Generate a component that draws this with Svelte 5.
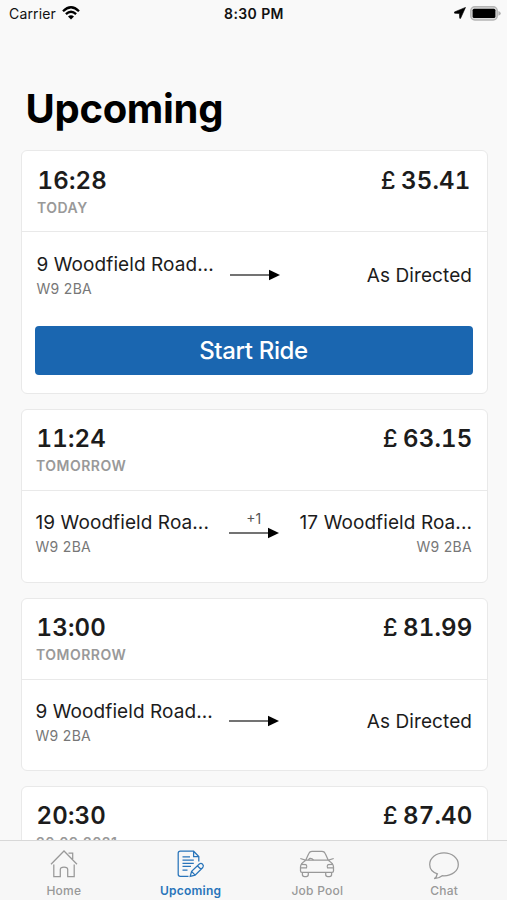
<script>
	let active = 'Upcoming';

	const rides = [
		{
			time: '16:28',
			day: 'TODAY',
			price: '35.41',
			from: '9 Woodfield Road...',
			fromCode: 'W9 2BA',
			to: 'As Directed',
			canStart: true
		},
		{
			time: '11:24',
			day: 'TOMORROW',
			price: '63.15',
			from: '19 Woodfield Roa...',
			fromCode: 'W9 2BA',
			to: '17 Woodfield Roa...',
			toCode: 'W9 2BA',
			stops: '+1'
		},
		{
			time: '13:00',
			day: 'TOMORROW',
			price: '81.99',
			from: '9 Woodfield Road...',
			fromCode: 'W9 2BA',
			to: 'As Directed'
		},
		{
			time: '20:30',
			day: '20.09.2021',
			price: '87.40'
		}
	];

	const tabs = ['Home', 'Upcoming', 'Job Pool', 'Chat'];
</script>

<div class="screen">
	<header class="status">
		<div class="carrier">
			<span>Carrier</span>
			<svg width="18" height="14" viewBox="0 0 18 14">
				<path d="M1 5.2Q9 -2.6 17 5.2M3.9 8.2Q9 3.3 14.1 8.2" fill="none" stroke="#000" stroke-width="2.3" />
				<path d="M6 10.4Q9 7.9 12 10.4L9 13.6Z" />
			</svg>
		</div>
		<div class="clock">8:30 PM</div>
		<div class="power">
			<svg width="12" height="12" viewBox="0 0 12 12">
				<path d="M11.5 0.4L0.4 5Q0 5.8 0.6 6.2L5.4 6.5L5.7 11.2Q6 11.9 6.6 11.3Z" stroke="#000" stroke-width="0.6" />
			</svg>
			<svg width="31" height="15" viewBox="0 0 31 15">
				<rect x="0.8" y="0.8" width="26.4" height="13.2" rx="4" fill="#dcdcdc" stroke="#b5b5b5" stroke-width="1.5" />
				<rect x="2.6" y="2.8" width="22.8" height="9.2" rx="1.5" />
				<path d="M28.4 5Q30.8 6 30.8 7.4T28.4 9.8Z" fill="#b0b0b0" />
			</svg>
		</div>
	</header>

	<h1>Upcoming</h1>

	<main>
		{#each rides as ride}
			<section class="card" class:next={ride.canStart}>
				<div class="head">
					<div>
						<div class="time">{ride.time}</div>
						<div class="day">{ride.day}</div>
					</div>
					<div class="price"><span>£</span>{ride.price}</div>
				</div>
				{#if ride.from}
					<div class="route">
						<div class="place">
							<div class="street">{ride.from}</div>
							<div class="code">{ride.fromCode}</div>
						</div>
						<div class="arrow">
							<span>{ride.stops || ''}</span>
							<svg width="50" height="12" viewBox="0 0 50 12">
								<path d="M0 6H40" stroke="#444" stroke-width="1.6" />
								<path d="M39 0.8L50 6L39 11.2Z" />
							</svg>
						</div>
						<div class="place to">
							<div class="street">{ride.to}</div>
							{#if ride.toCode}
								<div class="code">{ride.toCode}</div>
							{/if}
						</div>
					</div>
				{/if}
				{#if ride.canStart}
					<button class="start">Start Ride</button>
				{/if}
			</section>
		{/each}
	</main>

	<nav>
		{#each tabs as tab}
			<button class="tab" class:active={tab === active} on:click={() => (active = tab)}>
				<svg width="36" height="32" viewBox="0 0 36 32">
					{#if tab === 'Home'}
						<path d="M5 16.2L18 3L31 16.2M22.5 5.2H26.7V11M7.8 16.5V28.5H14.3V21.5Q14.3 19 18 19T21.7 21.5V28.5H28.2V16.5" />
					{:else if tab === 'Upcoming'}
						<path d="M15.5 28.3H7.2Q5.2 28.3 5.2 26.3V5.2Q5.2 3.2 7.2 3.2H20.6L25.8 8.6V13.5M20.6 3.2V8.6H25.8M9.5 8.8H17M9.5 12.2H20.8M9.5 15.3H20.8M9.5 18.4H18M9.5 22H14.5" />
						<path d="M17.2 28.3L18.6 23.3L26.3 16Q28.1 14.7 29.6 16.2T29.8 19.5L22.1 27.1ZM18.6 23.3L22.1 27.1M24.5 18L28 21.3" />
					{:else if tab === 'Job Pool'}
						<path d="M6.7 12.2L9.8 5.5Q10.7 3.4 13 3.4H23Q25.3 3.4 26.2 5.5L29.3 12.2M1.3 10.5L6.4 12.2H29.6L34.7 10.5M6.5 12.5Q1.5 15.5 1.5 19V23Q1.5 24.3 3 24.3H33Q34.5 24.3 34.5 23V19Q34.5 15.5 29.5 12.5" />
						<path d="M9.5 12Q10.5 9.5 13 10.8L14.5 12M2 16.3L7 16.7Q8.5 18.5 7.5 19.8H2M34 16.3L29 16.7Q27.5 18.5 28.5 19.8H34M3.4 24.5V26.5Q3.4 28.6 5.5 28.6H7.2Q9.3 28.6 9.3 26.5V24.5M26.7 24.5V26.5Q26.7 28.6 28.8 28.6H30.5Q32.6 28.6 32.6 26.5V24.5" />
					{:else}
						<path d="M12 26.2Q3.7 23.5 3.7 16.5C3.7 10.1 10 4.9 18 4.9S32.3 10.1 32.3 16.5S26 27.8 18 27.8L16.2 27.7Q13 30.4 8.2 30.6Q11.2 29.2 10.8 25.8" />
					{/if}
				</svg>
				<span>{tab}</span>
			</button>
		{/each}
	</nav>
</div>

<style>
	:global(body) {
		background: #f9f9f9;
	}
	.screen {
		display: flex;
		flex-direction: column;
		height: 900px;
		overflow: hidden;
		background: #f9f9f9;
		color: #1c1c1c;
		font-family: Inter, sans-serif;
	}
	.status {
		display: grid;
		grid-template-columns: 1fr auto 1fr;
		align-items: center;
		height: 26px;
		flex: none;
		padding: 0 6px 0 9px;
		color: #111;
		font-size: 14px;
	}
	.carrier,
	.power {
		display: flex;
		align-items: center;
		gap: 6px;
	}
	.carrier {
		letter-spacing: 0.15px;
	}
	.power {
		justify-content: flex-end;
		gap: 4px;
	}
	.clock {
		font-weight: 600;
		letter-spacing: 0.4px;
		margin-right: 2px;
	}
	h1 {
		flex: none;
		margin: 59px 0 0 25.5px;
		height: 65px;
		font-size: 40px;
		line-height: 48px;
		font-weight: 700;
		letter-spacing: -0.3px;
		color: #000;
	}
	main {
		flex: 1;
		min-height: 0;
		overflow: hidden;
		display: flex;
		flex-direction: column;
		gap: 15px;
		padding: 0 19.5px 0 20.5px;
	}
	.card {
		flex: none;
		box-sizing: border-box;
		min-height: 173.5px;
		border: 1.5px solid #e9e9e9;
		border-radius: 6px;
		background: #fff;
	}
	.head {
		display: flex;
		justify-content: space-between;
		box-sizing: border-box;
		height: 81px;
		padding: 14px 14px 0 15px;
		border-bottom: 1.5px solid #e9e9e9;
	}
	.next .head {
		padding: 15px 16px 0;
	}
	.time,
	.price {
		font-size: 24px;
		line-height: 30px;
		font-weight: 600;
		font-variant-numeric: tabular-nums;
		letter-spacing: 0.2px;
	}
	.price span {
		margin-right: 5px;
		font-weight: 500;
	}
	.day {
		margin: 4px 0 0 -0.5px;
		font-size: 14px;
		line-height: 16px;
		font-weight: 600;
		letter-spacing: 0.5px;
		color: #999;
	}
	.route {
		display: grid;
		grid-template-columns: 1fr 50px 1fr;
		align-items: center;
		gap: 16px;
		height: 47px;
		padding: 19px 14.5px 0 14px;
	}
	.next .route {
		padding-top: 20px;
		height: 46px;
	}
	.place {
		white-space: nowrap;
	}
	.to {
		text-align: right;
	}
	.next .street,
	.next .code {
		margin-left: 1px;
	}
	.street {
		font-size: 19px;
		line-height: 26px;
		letter-spacing: 0.08px;
	}
	.code {
		font-size: 14px;
		line-height: 21px;
		letter-spacing: 0.3px;
		color: #777;
	}
	.arrow {
		display: flex;
		flex-direction: column;
		align-items: center;
		height: 44px;
	}
	.arrow span {
		height: 15px;
		font-size: 14px;
		line-height: 14px;
		color: #555;
	}
	.start {
		display: block;
		width: 438px;
		height: 49px;
		margin: 28px 13px 18px;
		padding: 0;
		border: 0;
		border-radius: 4px;
		background: #1a66b0;
		color: #fff;
		font: 500 24px Inter, sans-serif;
		letter-spacing: -0.35px;
	}
	nav {
		display: grid;
		grid-template-columns: repeat(4, 1fr);
		flex: none;
		box-sizing: border-box;
		height: 60px;
		border-top: 1px solid #d8d8d8;
		background: #f7f7f7;
	}
	.tab {
		display: flex;
		flex-direction: column;
		align-items: center;
		gap: 3px;
		padding: 7px 0 0 1px;
		border: 0;
		background: none;
		color: #999;
		font: 500 12px/15px Inter, sans-serif;
		letter-spacing: 0.25px;
	}
	.tab svg {
		fill: none;
		stroke: currentColor;
		stroke-width: 1.25;
	}
	.tab.active {
		color: #2874ba;
		font-weight: 600;
	}
</style>
